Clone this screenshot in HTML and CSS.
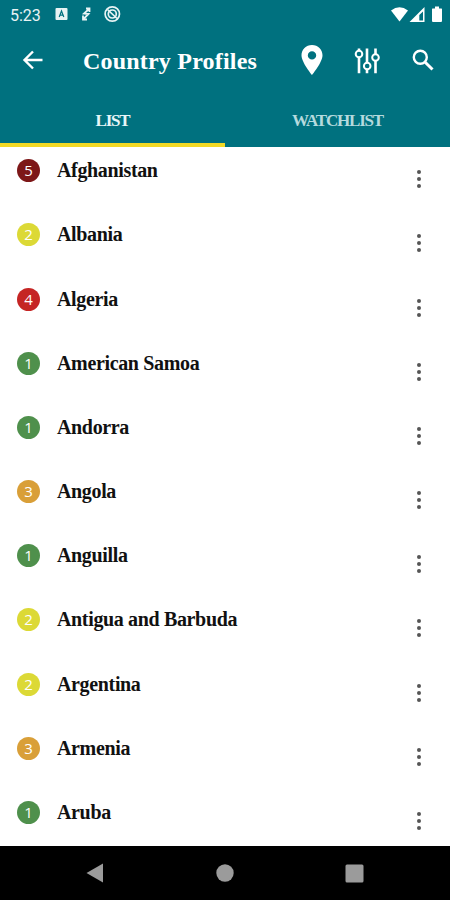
FILE: index.html
```html
<!DOCTYPE html>
<html lang="en">
  <head>
    <meta charset="utf-8">
    <title>Country Profiles</title>
    <link rel="stylesheet" href="styles.css">
  </head>
  <body>
    <header class="header">
      <div class="status-bar">
        <span class="time">5:23</span>
        <svg class="status-left" width="68" height="18" viewBox="0 0 68 18">
          <rect x="1.500" y="3" width="12" height="12" rx="1" fill="#e8f3f4"/>
          <path d="M5.200 12 7.500 6l2.300 6M6 10.200h3" fill="none" stroke="#00717f" stroke-width="1.200"/>
          <path d="M32 3.500h3.500v3.500M35 4l-5 4.500 4.500.5-5 5M29 10.500v4h4" fill="none" stroke="#e8f3f4" stroke-width="1.800"/>
          <circle cx="58.300" cy="9" r="7.200" fill="none" stroke="#e8f3f4" stroke-width="1.700"/>
          <circle cx="58.300" cy="9" r="4" fill="none" stroke="#e8f3f4" stroke-width="1.700"/>
          <path d="M53.500 4.500l9.500 9" stroke="#e8f3f4" stroke-width="1.700"/>
        </svg>
        <svg class="status-right" width="54" height="18" viewBox="0 0 54 18" fill="#fff">
          <path d="M1 5.500Q9.500-.8 18 5.500L9.500 16.500z"/>
          <path fill-rule="evenodd" d="M34.500 2v15H19.500zM29.300 10v5.500h3.700V6.500z"/>
          <path d="M42.500 3.500h2.500V1.500h4v2h2.500q.5 0 .5.700V15.800q0 1.200-1 1.200h-8q-1 0-1-1.200V4.200q0-.7.500-.7z"/>
        </svg>
      </div>
      <div class="toolbar">
        <svg class="back" width="22" height="20" viewBox="0 0 22 20">
          <path d="M20.500 10H2.500M11 1.500L2.500 10l8.500 8.500" fill="none" stroke="#fff" stroke-width="2.400"/>
        </svg>
        <h1 class="title">Country Profiles</h1>
        <svg class="pin" width="22" height="32" viewBox="0 0 22 32">
          <path fill="#fff" fill-rule="evenodd" d="M11 1C5 1 .5 5.500.5 11.300.5 18.500 11 31 11 31s10.500-12.500 10.500-19.700C21.500 5.500 17 1 11 1zm0 6.200a4.200 4.200 0 1 1 0 8.400 4.200 4.200 0 0 1 0-8.400z"/>
        </svg>
        <svg class="filter" width="26" height="26" viewBox="0 0 26 26" fill="none" stroke="#fff" stroke-width="2.600">
          <path d="M5 .5v2M5 9.500v15.800M13 .5v14M13 21.500v3.800M21.500 .5v5.500M21.500 13v12.300"/>
          <circle cx="5" cy="6" r="3.300" stroke-width="2"/>
          <circle cx="13.200" cy="18" r="3.300" stroke-width="2"/>
          <circle cx="21.500" cy="9.500" r="3.300" stroke-width="2"/>
        </svg>
        <svg class="search" width="22" height="22" viewBox="0 0 22 22" fill="none" stroke="#fff">
          <circle cx="8.300" cy="8.300" r="6.500" stroke-width="2.400"/>
          <path d="M13.200 13.200l7.300 7.300" stroke-width="3"/>
        </svg>
      </div>
      <nav class="tabs">
        <div class="tab active">LIST</div>
        <div class="tab">WATCHLIST</div>
      </nav>
    </header>

    <ul class="list">
      <li class="row"><span class="level level5">5</span><span class="name">Afghanistan</span><span class="more"><i></i><i></i><i></i></span></li>
      <li class="row"><span class="level level2">2</span><span class="name">Albania</span><span class="more"><i></i><i></i><i></i></span></li>
      <li class="row"><span class="level level4">4</span><span class="name">Algeria</span><span class="more"><i></i><i></i><i></i></span></li>
      <li class="row"><span class="level level1">1</span><span class="name">American Samoa</span><span class="more"><i></i><i></i><i></i></span></li>
      <li class="row"><span class="level level1">1</span><span class="name">Andorra</span><span class="more"><i></i><i></i><i></i></span></li>
      <li class="row"><span class="level level3">3</span><span class="name">Angola</span><span class="more"><i></i><i></i><i></i></span></li>
      <li class="row"><span class="level level1">1</span><span class="name">Anguilla</span><span class="more"><i></i><i></i><i></i></span></li>
      <li class="row"><span class="level level2">2</span><span class="name">Antigua and Barbuda</span><span class="more"><i></i><i></i><i></i></span></li>
      <li class="row"><span class="level level2">2</span><span class="name">Argentina</span><span class="more"><i></i><i></i><i></i></span></li>
      <li class="row"><span class="level level3">3</span><span class="name">Armenia</span><span class="more"><i></i><i></i><i></i></span></li>
      <li class="row"><span class="level level1">1</span><span class="name">Aruba</span><span class="more"><i></i><i></i><i></i></span></li>
    </ul>

    <footer class="nav-bar">
      <svg width="18" height="20" viewBox="0 0 18 20"><path d="M.5 10L17 .5v19z" fill="#9b9b9b"/></svg>
      <svg width="18" height="18" viewBox="0 0 18 18"><circle cx="9" cy="9" r="8.700" fill="#9b9b9b"/></svg>
      <svg width="19" height="19" viewBox="0 0 19 19"><rect x=".5" y=".5" width="18" height="18" rx="1.500" fill="#9b9b9b"/></svg>
    </footer>
  </body>
</html>
```
FILE: styles.css
```css
* {
  box-sizing: border-box;
}
body {
  margin: 0;
  height: 900px;
  display: flex;
  flex-direction: column;
  overflow: hidden;
  background-color: #fff;
  font-family: "Liberation Serif", serif;
}
svg {
  display: block;
  flex: none;
}

/* header */
.header {
  height: 147px;
  flex: none;
  background-color: #00717f;
  color: #fff;
}
.status-bar {
  height: 30px;
  display: flex;
  align-items: center;
  padding: 0 7px 0 10px;
}
.time {
  width: 44px;
  font-family: Roboto, sans-serif;
  font-size: 16px;
  color: #e8f3f4;
}
.status-left {
  margin-top: -2px;
}
.status-right {
  margin-left: auto;
  margin-right: -9px;
  width: 62px;
  padding-right: 8px;
  margin-top: -2px;
}
.toolbar {
  height: 62px;
  display: flex;
  align-items: center;
  padding: 0 16px 0 22px;
}
.back {
  margin-top: -2px;
}
.title {
  margin: 0 0 0 39px;
  width: 219px;
  font-size: 24px;
  line-height: 30px;
  white-space: nowrap;
  letter-spacing: 0.2px;
}
.pin {
  margin-top: -2px;
}
.filter {
  margin-left: 31px;
}
.search {
  margin-left: 32px;
  margin-top: -2px;
}
.tabs {
  display: flex;
  height: 55px;
}
.tab {
  flex: 1;
  padding-top: 18px;
  text-align: center;
  font-size: 17px;
  line-height: 22px;
  font-weight: bold;
  letter-spacing: -1.2px;
  color: #b5dade;
  border-bottom: 4px solid transparent;
}
.active {
  color: #e8f6f8;
  border-bottom-color: #f2d925;
}

/* country list */
.list {
  flex: 1;
  min-height: 0;
  margin: 0;
  padding: 0;
  list-style: none;
  overflow: hidden;
}
.row {
  display: flex;
  align-items: flex-start;
  height: 64.17px;
  padding: 12.3px 27px 0 17px;
}
.level {
  width: 23px;
  height: 23px;
  border-radius: 50%;
  color: #fff;
  font-family: "Open Sans", sans-serif;
  font-size: 15px;
  font-weight: 500;
  line-height: 23px;
  text-align: center;
}
.level1 { background-color: #4f904c; }
.level2 { background-color: #dcd936; }
.level3 { background-color: #d99f38; }
.level4 { background-color: #c52524; }
.level5 { background-color: #7d1718; }
.name {
  flex: 1;
  margin-left: 17px;
  color: #111;
  font-size: 20px;
  line-height: 23px;
  font-weight: bold;
  letter-spacing: -0.35px;
}
.more {
  display: flex;
  flex-direction: column;
  gap: 3px;
  padding-top: 11px;
  width: 6.5px;
}
.more i {
  width: 4px;
  height: 4px;
  border-radius: 50%;
  background-color: #555;
}

/* system buttons */
.nav-bar {
  height: 54px;
  flex: none;
  display: flex;
  align-items: center;
  justify-content: space-between;
  padding: 0 86px;
  background-color: #000;
}
```
